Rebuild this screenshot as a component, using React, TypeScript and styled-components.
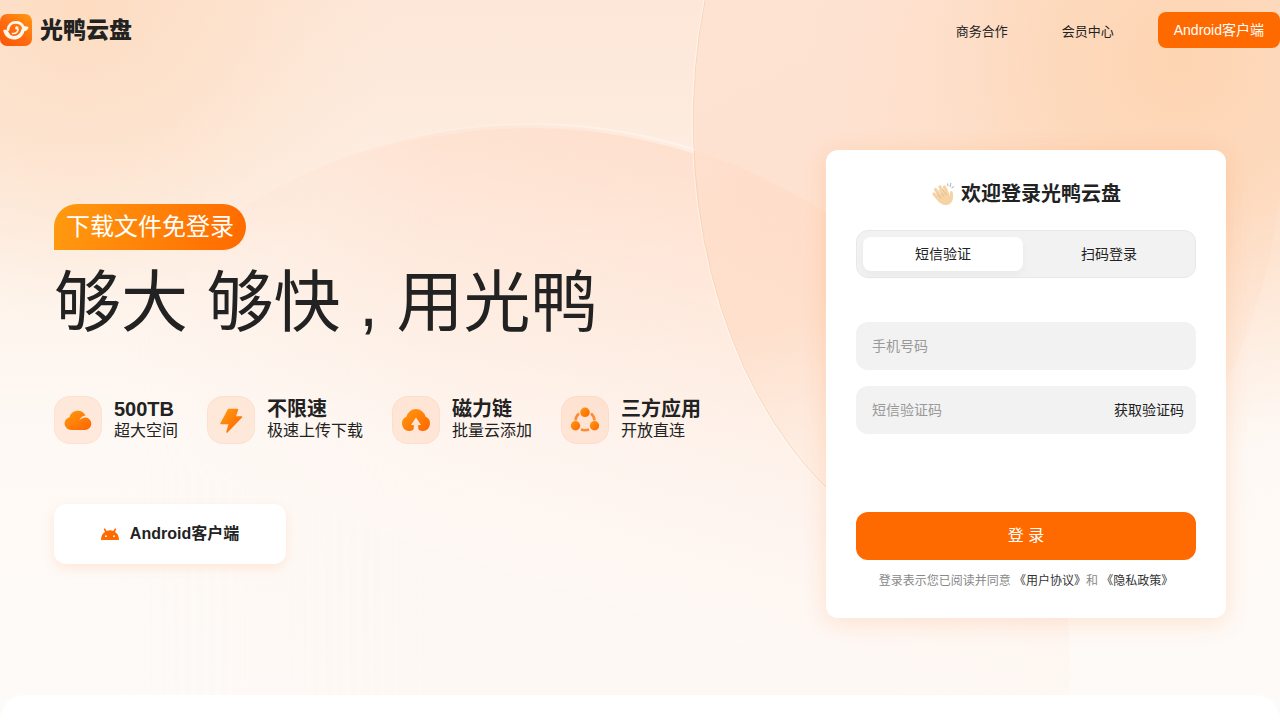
import React from 'react';
import styled, { createGlobalStyle } from 'styled-components';

const GlobalStyle = createGlobalStyle`
  *, *::before, *::after { box-sizing: border-box; }
  body {
    margin: 0;
    color: #222;
    background: #fff;
    font-family: "Liberation Sans", "Noto Sans CJK SC", sans-serif;
    font-size: 14px;
    line-height: 20px;
  }
  button, input { font: inherit; color: inherit; }
  button { cursor: pointer; border: 0; padding: 0; }
  a { color: inherit; text-decoration: none; }
  h1, h2, p, ul { margin: 0; padding: 0; }
`;

const Page = styled.div`
  position: relative;
  overflow: hidden;
  display: flex;
  flex-direction: column;
  min-height: 100vh;
`;

const Backdrop = styled.svg`
  position: absolute;
  inset: 0;
  width: 100%;
  height: 100%;
  z-index: -1;
`;

const Header = styled.header`
  display: flex;
  align-items: center;
  justify-content: space-between;
  height: 60px;
`;

const Brand = styled.a`
  display: flex;
  align-items: center;
  gap: 8px;
  font-size: 23px;
  font-weight: 900;
  line-height: 32px;
`;

const Nav = styled.nav`
  display: flex;
  align-items: center;
  font-size: 13px;
`;

const NavLink = styled.a`
  margin-right: 54px;
  padding-top: 4px;
  &:nth-of-type(2) { margin-right: 44px; }
`;

const HeaderButton = styled.button`
  height: 36px;
  padding: 0 16px;
  border-radius: 8px;
  background: #ff6a00;
  color: #fff;
  font-size: 14px;
`;

const Main = styled.main`
  flex: 1;
  display: flex;
  align-items: flex-start;
  justify-content: space-between;
  padding: 90px 54px 77px;
`;

const Hero = styled.section`
  padding-top: 54px;
`;

const Tag = styled.p`
  width: fit-content;
  padding: 0 12px;
  border-radius: 24px 24px 24px 0;
  background: linear-gradient(100deg, #ff9a10, #ff6a00);
  color: #fff;
  font-size: 24px;
  line-height: 46px;
`;

const Title = styled.h1`
  margin-top: 4px;
  font-size: 67px;
  font-weight: 400;
  line-height: 98px;
  white-space: nowrap;
`;

const Features = styled.ul`
  display: flex;
  gap: 29px;
  margin-top: 44px;
  list-style: none;
`;

const Feature = styled.li`
  display: flex;
  gap: 12px;
  white-space: nowrap;
`;

const FeatureIcon = styled.span`
  display: grid;
  place-items: center;
  width: 48px;
  height: 48px;
  border: 1px solid rgba(255, 130, 60, 0.08);
  border-radius: 16px;
  background: rgba(255, 120, 40, 0.12);
`;

const FeatureName = styled.p`
  padding-top: 2px;
  font-size: 20px;
  font-weight: 700;
  line-height: 22px;
`;

const FeatureNote = styled.p`
  font-size: 16px;
  line-height: 22px;
`;

const Download = styled.button`
  display: flex;
  align-items: center;
  justify-content: center;
  gap: 11px;
  width: 232px;
  height: 60px;
  margin-top: 60px;
  border-radius: 12px;
  background: #fff;
  box-shadow: 0 4px 12px rgba(255, 106, 0, 0.12);
  font-size: 16px;
  font-weight: 700;
`;

const Card = styled.form`
  display: flex;
  flex-direction: column;
  width: 400px;
  padding: 30px 30px 28px;
  border-radius: 12px;
  background: #fff;
  box-shadow: 0 4px 24px rgba(255, 106, 0, 0.16);
`;

const Welcome = styled.h2`
  display: flex;
  align-items: center;
  justify-content: center;
  gap: 6px;
  height: 28px;
  font-size: 20px;
  line-height: 28px;
`;

const Tabs = styled.div`
  display: grid;
  grid-template-columns: 160px 160px;
  gap: 6px;
  margin-top: 22px;
  padding: 6px;
  border: 1px solid #e8e8e8;
  border-radius: 12px;
  background: #f2f2f2;
`;

const Tab = styled.button<{ $active?: boolean }>`
  height: 34px;
  border-radius: 8px;
  background: ${p => (p.$active ? '#fff' : 'transparent')};
  box-shadow: ${p => (p.$active ? '0 4px 8px rgba(0, 0, 0, 0.04)' : 'none')};
`;

const Fields = styled.div`
  display: grid;
  gap: 16px;
  margin-top: 44px;
`;

const Field = styled.div`
  display: flex;
  align-items: center;
  height: 48px;
  padding: 0 12px 0 16px;
  border-radius: 12px;
  background: #f2f2f2;
`;

const TextInput = styled.input`
  flex: 1;
  min-width: 0;
  height: 48px;
  padding: 0;
  border: 0;
  outline: 0;
  background: transparent;
  &::placeholder { color: #999; opacity: 1; }
`;

const CodeButton = styled.button`
  background: transparent;
`;

const Submit = styled.button`
  height: 48px;
  margin-top: 78px;
  border-radius: 12px;
  background: #ff6a00;
  color: #fff;
  font-size: 16px;
`;

const Terms = styled.p`
  margin-top: 12px;
  text-align: center;
  color: #888;
  font-size: 12px;
  line-height: 18px;
  a { color: #333; }
`;

const NextSection = styled.section`
  height: 25px;
  border-radius: 32px 32px 0 0;
  background: #fff;
`;

const Scene = () => (
  <Backdrop viewBox="0 0 1280 720" preserveAspectRatio="xMidYMin slice" aria-hidden="true">
    <defs>
      <linearGradient id="base" x1="0" y1="0" x2="0" y2="1">
        <stop offset="0" stopColor="#fde7d8" />
        <stop offset="0.2" stopColor="#fdecdf" />
        <stop offset="0.42" stopColor="#fef4ec" />
        <stop offset="0.6" stopColor="#fef9f5" />
        <stop offset="1" stopColor="#fefaf7" />
      </linearGradient>
      <radialGradient id="glowLeft" gradientUnits="userSpaceOnUse" cx="80" cy="0" r="320">
        <stop offset="0" stopColor="#fddabd" stopOpacity="0.85" />
        <stop offset="0.5" stopColor="#fddfc6" stopOpacity="0.6" />
        <stop offset="1" stopColor="#fde4d0" stopOpacity="0" />
      </radialGradient>
      <radialGradient id="glowRight" gradientUnits="userSpaceOnUse" cx="1180" cy="60" r="400">
        <stop offset="0" stopColor="#fed5b2" />
        <stop offset="0.35" stopColor="#fdd8ba" stopOpacity="0.85" />
        <stop offset="1" stopColor="#fee4d3" stopOpacity="0" />
      </radialGradient>
      <linearGradient id="lowerDisc" gradientUnits="userSpaceOnUse" x1="740" y1="150" x2="600" y2="600">
        <stop offset="0" stopColor="#ffdac6" stopOpacity="0.7" />
        <stop offset="0.5" stopColor="#ffe2d2" stopOpacity="0.4" />
        <stop offset="1" stopColor="#fff0e8" stopOpacity="0.1" />
      </linearGradient>
      <linearGradient id="discFade" x1="0" y1="0" x2="1" y2="0">
        <stop offset="0.12" stopColor="#000" />
        <stop offset="0.4" stopColor="#fff" />
      </linearGradient>
      <mask id="discMask" maskUnits="userSpaceOnUse" x="-10" y="120" width="1090" height="600">
        <rect x="-10" y="120" width="1090" height="600" fill="url(#discFade)" />
      </mask>
      <linearGradient id="upperDisc" gradientUnits="userSpaceOnUse" x1="900" y1="0" x2="1060" y2="520">
        <stop offset="0" stopColor="#ffe0d0" stopOpacity="0.75" />
        <stop offset="0.5" stopColor="#fedac2" stopOpacity="0.65" />
        <stop offset="1" stopColor="#fff1e7" stopOpacity="0.1" />
      </linearGradient>
      <linearGradient id="arcRim" x1="0" y1="0" x2="1" y2="0">
        <stop offset="0" stopColor="#fff" stopOpacity="0" />
        <stop offset="1" stopColor="#fff" stopOpacity="0.4" />
      </linearGradient>
    </defs>
    <rect width="1280" height="720" fill="url(#base)" />
    <rect width="1280" height="720" fill="url(#glowLeft)" />
    <circle cx="530" cy="665" r="540" fill="url(#lowerDisc)" mask="url(#discMask)" />
    <path d="M330 164A540 540 0 0 1 694 151" fill="none" stroke="url(#arcRim)" strokeWidth="5" />
    <ellipse cx="989" cy="122" rx="295" ry="437" fill="url(#upperDisc)" />
    <rect width="1280" height="720" fill="url(#glowRight)" />
    <path d="M705 0A295 437 0 0 0 827 488" fill="none" stroke="#f8c69f" strokeOpacity="0.6" />
    <path d="M704 0A295 437 0 0 0 826 489" fill="none" stroke="#fff" strokeOpacity="0.5" />
  </Backdrop>
);

const LogoMark = () => (
  <svg width="32" height="32" viewBox="0 0 32 32" aria-hidden="true">
    <defs>
      <linearGradient id="logo" x1="1" y1="0" x2="0.2" y2="1">
        <stop stopColor="#ff9a10" /><stop offset="0.6" stopColor="#ff6a10" /><stop offset="1" stopColor="#fa5a08" />
      </linearGradient>
    </defs>
    <rect width="32" height="32" rx="7" fill="url(#logo)" />
    <path d="M8 15.500C8.500 11 11.800 8.300 15.800 8.300C20 8.300 22.300 10.500 23.300 13.300L27 14" fill="none" stroke="#fff7e8" strokeWidth="2.800" strokeLinejoin="round" strokeLinecap="round" />
    <path d="M28.200 13.500C27.800 16 26 17.300 24.300 17.200C23.500 22 19 25.500 13.800 25.500C8.500 25.500 4.200 22 3.200 16C5 15.300 7.500 15.800 8.300 17.500C9.500 20.800 11.500 22 14 22C18 22 20.800 19 21.300 15.500L23.500 12.500Z" fill="#fff7e8" />
    <path d="M12.500 19.500C15.500 20 17.500 18 18.200 15.500" fill="none" stroke="#fff7e8" strokeWidth="1.500" strokeLinecap="round" />
    <circle cx="16.800" cy="14" r="1.700" fill="#fff7e8" />
  </svg>
);

const OrangeFill = ({ id }: { id: string }) => (
  <defs>
    <linearGradient id={id} x1="0" y1="0" x2="1" y2="1">
      <stop stopColor="#ff9a10" /><stop offset="1" stopColor="#ff6500" />
    </linearGradient>
  </defs>
);

const CloudIcon = () => (
  <svg width="28" height="28" viewBox="0 0 28 28" aria-hidden="true">
    <OrangeFill id="cloud" />
    <path d="M7 24A6.500 6.500 0 0 1 5.500 11.200A8.600 8.600 0 0 1 21.500 9.500C18.500 10 16.500 11.500 15.200 14.200C18 12 20 11.200 22 11.500A6.300 6.300 0 0 1 21.500 24Z" fill="url(#cloud)" />
  </svg>
);

const BoltIcon = () => (
  <svg width="28" height="28" viewBox="0 0 28 28" aria-hidden="true">
    <OrangeFill id="bolt" />
    <path d="M11.500 3.500H20.500L18 11H24.500L10 26L12.500 17.500H4Z" fill="url(#bolt)" stroke="url(#bolt)" strokeWidth="1.500" strokeLinejoin="round" />
  </svg>
);

const UploadIcon = () => (
  <svg width="30" height="28" viewBox="0 0 30 28" aria-hidden="true">
    <OrangeFill id="upload" />
    <path d="M12.800 22Q12.800 25 8 25A7.600 7.600 0 0 1 5.500 10.500A9.800 9.800 0 0 1 24.500 10.500A7.600 7.600 0 0 1 22 25Q17.200 25 17.200 22V19H20L15 11.500L10 19H12.800Z" fill="url(#upload)" />
  </svg>
);

const LinkIcon = () => (
  <svg width="30" height="28" viewBox="0 0 30 28" aria-hidden="true">
    <OrangeFill id="link" />
    <path d="M9 7.500Q5.500 10.500 5.500 14.500M21 7.500Q24.500 10.500 24.500 14.500M11 23.500Q15 25 19 23.500" fill="none" stroke="#ff8a30" strokeWidth="2.500" />
    <g fill="url(#link)"><circle cx="15" cy="6.300" r="4.800" /><circle cx="5.500" cy="19.800" r="4.700" /><circle cx="24.500" cy="19.800" r="4.700" /></g>
  </svg>
);

const AndroidIcon = () => (
  <svg width="18" height="12" viewBox="0 0 18 12" aria-hidden="true">
    <path d="M0 12C0 8 1.500 5.500 4 4L2.600 0.900L3.900 0.200L5.700 3A9 9 0 0 1 12.300 3L14.100 0.200L15.400 0.900L14 4C16.500 5.500 18 8 18 12Z" fill="#ff6a00" />
    <circle cx="5" cy="8.200" r="0.900" fill="#fff" /><circle cx="13" cy="8.200" r="0.900" fill="#fff" />
  </svg>
);

const ClapIcon = () => (
  <svg width="24" height="24" viewBox="0 0 24 24" aria-hidden="true">
    <g fill="none" stroke="#f5d3a4" strokeWidth="3.200" strokeLinecap="round">
      <path d="M3 12L9 19M4.500 7.500L11 16M9 5L14 14M13.500 5L17 13" />
    </g>
    <path d="M4.500 14L15 9.500L19 14C19 10 19 9 20.500 9C22.500 10 22 13 22 16C21.500 21 18 23.500 14 23C9.500 22.500 7 18.500 4.500 14Z" fill="#f5d3a4" />
    <path d="M5.500 11L10 16M8 8L13 14.500M11.500 7L15.500 13" fill="none" stroke="#dcb07c" strokeWidth="0.700" />
    <path d="M16.500 1.500L17 4M20 1L19 5M23 4.500L20.500 6" stroke="#a5b3ba" />
  </svg>
);

const features = [
  { name: '500TB', note: '超大空间', Icon: CloudIcon },
  { name: '不限速', note: '极速上传下载', Icon: BoltIcon },
  { name: '磁力链', note: '批量云添加', Icon: UploadIcon },
  { name: '三方应用', note: '开放直连', Icon: LinkIcon },
];

export default function App() {
  return (
    <Page>
      <GlobalStyle />
      <Scene />
      <Header>
        <Brand href="#"><LogoMark />光鸭云盘</Brand>
        <Nav>
          <NavLink href="#business">商务合作</NavLink>
          <NavLink href="#member">会员中心</NavLink>
          <HeaderButton type="button">Android客户端</HeaderButton>
        </Nav>
      </Header>
      <Main>
        <Hero>
          <Tag>下载文件免登录</Tag>
          <Title>够大 够快 , 用光鸭</Title>
          <Features>
            {features.map(({ name, note, Icon }) => (
              <Feature key={name}>
                <FeatureIcon><Icon /></FeatureIcon>
                <div>
                  <FeatureName>{name}</FeatureName>
                  <FeatureNote>{note}</FeatureNote>
                </div>
              </Feature>
            ))}
          </Features>
          <Download type="button"><AndroidIcon />Android客户端</Download>
        </Hero>
        <Card onSubmit={e => e.preventDefault()}>
          <Welcome><ClapIcon />欢迎登录光鸭云盘</Welcome>
          <Tabs role="tablist">
            <Tab type="button" role="tab" aria-selected="true" $active>短信验证</Tab>
            <Tab type="button" role="tab" aria-selected="false">扫码登录</Tab>
          </Tabs>
          <Fields>
            <Field><TextInput type="tel" aria-label="手机号码" placeholder="手机号码" /></Field>
            <Field>
              <TextInput type="text" aria-label="短信验证码" placeholder="短信验证码" />
              <CodeButton type="button">获取验证码</CodeButton>
            </Field>
          </Fields>
          <Submit type="submit">登 录</Submit>
          <Terms>登录表示您已阅读并同意 <a href="#terms">《用户协议》</a>和 <a href="#privacy">《隐私政策》</a></Terms>
        </Card>
      </Main>
      <NextSection />
    </Page>
  );
}
